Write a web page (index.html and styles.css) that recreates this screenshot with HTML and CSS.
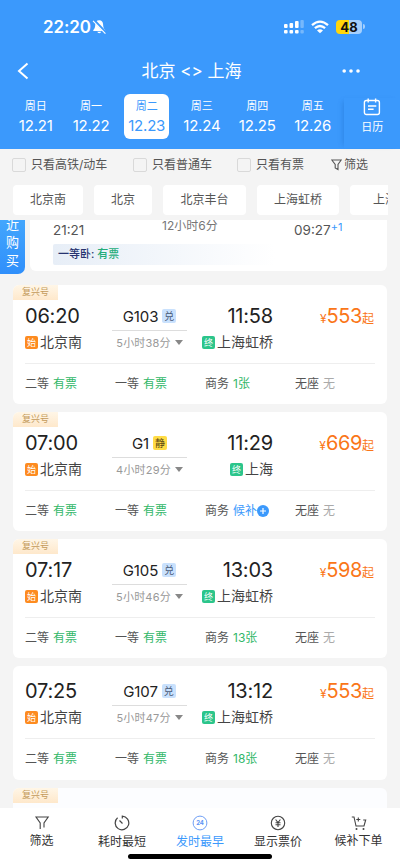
FILE: index.html
```html
<!DOCTYPE html>
<html lang="zh-CN">
<head>
<meta charset="utf-8">
<meta name="viewport" content="width=device-width, initial-scale=1">
<title>北京 - 上海</title>
<link rel="stylesheet" href="styles.css">
</head>
<body>
<div class="app">
  <header class="top">
    <div class="status">
      <span class="clock">22:20</span>
      <svg class="bell" width="15" height="16" viewBox="0 0 15 16"><path d="M7.2 1.2C4.6 1.2 3.4 3 3.3 5.4 3.2 8.2 2.700 9.500 1.300 11V12H13.200V11C11.700 9.500 11.200 8.200 11.100 5.400 11 3 9.800 1.200 7.200 1.200ZM5.300 12.800A2 1.800 0 0 0 9.200 12.800Z" fill="#fff"/><path d="M2.200 1.500 14.200 14" stroke="#3b99fc" stroke-width="2.600"/><path d="M1 1.800 13.400 14.600" stroke="#fff" stroke-width="1.100"/></svg>
      <span class="fill"></span>
      <svg class="signal" width="22" height="16" viewBox="0 0 22 16"><g fill="#fff"><rect x="1" y="5" width="3.600" height="4" rx="1"/><rect x="6.500" y="4" width="3.600" height="5" rx="1"/><rect x="12" y="2" width="3.600" height="7" rx="1"/><rect x="1" y="11" width="3.600" height="3.500" rx="1"/><rect x="6.500" y="11" width="3.600" height="3.500" rx="1"/><rect x="12" y="11" width="3.600" height="3.500" rx="1"/></g><g fill="#fff" opacity=".3"><rect x="17.400" y="1" width="3.400" height="8" rx="1"/><rect x="17.400" y="11" width="3.400" height="3.500" rx="1"/></g></svg>
      <svg class="wifi" width="18" height="14" viewBox="0 0 18 14"><g fill="none" stroke="#fff" stroke-width="2.300"><path d="M1 5.200Q9-2 17 5.200"/><path d="M3.900 8.200Q9 3.800 14.100 8.200"/></g><path d="M6 10.400Q9 7.900 12 10.400L9 13.300Z" fill="#fff"/></svg>
      <span class="battery">48</span><i class="cap"></i>
    </div>
    <div class="nav">
      <svg width="12" height="18" viewBox="0 0 12 18"><path d="M10.500 1.500 2 9l8.500 7.500" fill="none" stroke="#fff" stroke-width="2"/></svg>
      <h1>北京 &lt;&gt; 上海</h1>
      <svg width="18" height="6" viewBox="0 0 18 6"><g fill="#fff"><circle cx="2.200" cy="3" r="1.800"/><circle cx="9" cy="3" r="1.800"/><circle cx="16" cy="3" r="1.800"/></g></svg>
    </div>
    <div class="dates">
      <div class="day"><span>周日</span><b>12.21</b></div>
      <div class="day"><span>周一</span><b>12.22</b></div>
      <div class="day active"><span>周二</span><b>12.23</b></div>
      <div class="day"><span>周三</span><b>12.24</b></div>
      <div class="day"><span>周四</span><b>12.25</b></div>
      <div class="day"><span>周五</span><b>12.26</b></div>
      <div class="calendar">
        <svg width="18" height="18" viewBox="0 0 18 18" fill="none" stroke="#fff" stroke-width="1.400"><rect x="1.400" y="2.500" width="15" height="14" rx="2"/><path d="M5.200 .5v4M12.600 .5v4M5 8h8.300M5 11.300h5.600"/></svg>
        <span>日历</span>
      </div>
    </div>
  </header>

  <div class="filters">
    <label class="check c1"><i></i>只看高铁/动车</label>
    <label class="check c2"><i></i>只看普通车</label>
    <label class="check c3"><i></i>只看有票</label>
    <span class="sift"><svg width="11" height="12" viewBox="0 0 11 12"><path d="M.8 1h9.400L7 5.500v5L4.200 9V5.500Z" fill="none" stroke="#555" stroke-width="1.100"/></svg>筛选</span>
  </div>
  <div class="stations">
    <span class="s1">北京南</span><span class="s2">北京</span><span class="s3">北京丰台</span><span class="s4">上海虹桥</span><span class="s5">上海</span>
  </div>

  <main class="list">
    <section class="partial">
      <aside class="recent"><span>近</span><span>购</span><span>买</span></aside>
      <div class="clipped">
        <div class="times"><span class="from">21:21</span><span class="dur">12小时6分</span><span class="to">09:27<sup>+1</sup></span></div>
        <div class="sleeper">一等卧: <em>有票</em></div>
      </div>
    </section>

    <article class="card">
      <span class="tag">复兴号</span>
      <div class="trip">
        <div class="dep"><b>06:20</b><p><i class="start">始</i>北京南</p></div>
        <div class="mid"><strong>G103<i class="swap">兑</i></strong><hr><small>5小时38分<u></u></small></div>
        <div class="arr"><b>11:58</b><p><i class="end">终</i>上海虹桥</p></div>
        <div class="price"><small>¥</small>553<small>起</small></div>
      </div>
      <div class="seats"><span>二等 <em>有票</em></span><span>一等 <em>有票</em></span><span>商务 <em>1张</em></span><span>无座 <em class="none">无</em></span></div>
    </article>

    <article class="card">
      <span class="tag">复兴号</span>
      <div class="trip">
        <div class="dep"><b>07:00</b><p><i class="start">始</i>北京南</p></div>
        <div class="mid"><strong>G1<i class="quiet">静</i></strong><hr><small>4小时29分<u></u></small></div>
        <div class="arr"><b>11:29</b><p><i class="end">终</i>上海</p></div>
        <div class="price"><small>¥</small>669<small>起</small></div>
      </div>
      <div class="seats"><span>二等 <em>有票</em></span><span>一等 <em>有票</em></span><span>商务 <em class="wait">候补<svg width="12" height="12" viewBox="0 0 12 12"><circle cx="6" cy="6" r="6" fill="#3b99fc"/><path d="M6 3v6M3 6h6" stroke="#fff" stroke-width="1.200"/></svg></em></span><span>无座 <em class="none">无</em></span></div>
    </article>

    <article class="card">
      <span class="tag">复兴号</span>
      <div class="trip">
        <div class="dep"><b>07:17</b><p><i class="start">始</i>北京南</p></div>
        <div class="mid"><strong>G105<i class="swap">兑</i></strong><hr><small>5小时46分<u></u></small></div>
        <div class="arr"><b>13:03</b><p><i class="end">终</i>上海虹桥</p></div>
        <div class="price"><small>¥</small>598<small>起</small></div>
      </div>
      <div class="seats"><span>二等 <em>有票</em></span><span>一等 <em>有票</em></span><span>商务 <em>13张</em></span><span>无座 <em class="none">无</em></span></div>
    </article>

    <article class="card plain">
      <div class="trip">
        <div class="dep"><b>07:25</b><p><i class="start">始</i>北京南</p></div>
        <div class="mid"><strong>G107<i class="swap">兑</i></strong><hr><small>5小时47分<u></u></small></div>
        <div class="arr"><b>13:12</b><p><i class="end">终</i>上海虹桥</p></div>
        <div class="price"><small>¥</small>553<small>起</small></div>
      </div>
      <div class="seats"><span>二等 <em>有票</em></span><span>一等 <em>有票</em></span><span>商务 <em>18张</em></span><span>无座 <em class="none">无</em></span></div>
    </article>

    <article class="card peek"><span class="tag">复兴号</span></article>
  </main>

  <footer class="tabs">
    <div class="tab side"><svg width="16" height="16" viewBox="0 0 16 16" fill="none" stroke="#444" stroke-width="1.100"><path d="M6.200 14V8L2 2h12.200L10 8v4.500"/></svg><span>筛选</span></div>
    <div class="tab"><svg width="16" height="16" viewBox="0 0 16 16" fill="none" stroke="#444" stroke-width="1.200"><path d="M8.300 3.500V1.200A6.800 6.800 0 1 1 3.600 2.800M5.500 5.500l3 3"/></svg><span>耗时最短</span></div>
    <div class="tab on"><svg width="16" height="16" viewBox="0 0 16 16"><circle cx="8" cy="8" r="6.900" fill="none" stroke="#6f9ff5" stroke-width="1"/><text x="8" y="10.200" text-anchor="middle" class="num">24</text></svg><span>发时最早</span></div>
    <div class="tab"><svg width="16" height="16" viewBox="0 0 16 16" fill="none" stroke="#444" stroke-width="1.100"><circle cx="8" cy="8" r="6.700"/><path d="M5.600 4.500 8 7.500l2.400-3M8 7.500V12M5.500 7.700h5M5.500 9.800h5"/></svg><span>显示票价</span></div>
    <div class="tab side"><svg width="16" height="16" viewBox="0 0 16 16" fill="none" stroke="#444" stroke-width="1.100"><path d="M.8 2h2.200l2 9h8l1.700-6h-2.500M7.300 2.500v4M5.300 4.500h4"/><g fill="#444" stroke="none"><circle cx="5.500" cy="14" r="1"/><circle cx="12.500" cy="14" r="1"/></g></svg><span>候补下单</span></div>
    <i class="home"></i>
  </footer>
</div>
</body>
</html>
```
FILE: styles.css
```css
* { box-sizing: border-box; margin: 0; padding: 0; }
body { font-family: Inter, "Noto Sans CJK SC", sans-serif; color: #555; }
i, em { font-style: normal; }
svg { display: block; flex: none; }
.app { width: 400px; height: 867px; overflow: hidden; background: #f4f4f4; display: flex; flex-direction: column; }

.top { height: 149px; flex: none; background: #3b99fc; color: #fff; }
.status { height: 49px; padding: 12px 35px 0 43px; display: flex; align-items: center; }
.status > * { margin-top: -8px; }
.clock { font-size: 17px; font-weight: 600; line-height: 20px; width: 49px; letter-spacing: -.1px; }
.status .fill { flex: 1; }
.wifi { margin-left: 6px; margin-right: 7px; }
.battery { width: 26px; height: 14px; line-height: 14px; border-radius: 4px; text-align: center; font-size: 13px; font-weight: 700; color: #111; background: linear-gradient(90deg, #ffd60a 50%, #a5d0fd 50%); }
.cap { width: 2px; height: 5px; margin-left: 1px; border-radius: 0 2px 2px 0; background: #a5d0fd; }
.nav { height: 44px; padding: 0 40px 0 17px; display: flex; align-items: center; justify-content: space-between; }
.nav h1 { font-size: 17px; font-weight: 400; line-height: 24px; margin-left: 12px; white-space: nowrap; }
.dates { height: 56px; display: flex; padding-left: 8px; }
.day { width: 55.400px; height: 45px; margin-top: 1px; padding-top: 4px; text-align: center; flex: none; }
.day span, .day b { display: block; font-weight: 400; }
.day span { font-size: 11px; line-height: 16px; }
.day b { font-size: 15px; line-height: 18px; margin-top: 3px; letter-spacing: -.2px; }
.day.active { width: 45px; margin-left: 5.400px; margin-right: 5px; background: #fff; color: #3b99fc; border-radius: 6px; }
.calendar { flex: 1; margin-left: 4px; height: 50px; margin-top: 5px; display: flex; flex-direction: column; align-items: center; font-size: 11px; line-height: 16px; box-shadow: -4px 0 5px -3px rgba(20, 90, 180, .3); }
.calendar svg { margin-bottom: 3px; }

.filters { height: 36px; flex: none; display: flex; align-items: center; padding: 0 0 4px 12px; font-size: 12px; line-height: 18px; }
.check, .sift { display: flex; align-items: center; flex: none; white-space: nowrap; }
.check i { width: 14px; height: 14px; border: 1px solid #d9d9d9; border-radius: 2px; margin-right: 5px; }
.c1 { width: 121px; }
.c2 { width: 104px; }
.c3 { width: 94px; }
.sift svg { margin-right: 2px; }
.stations { height: 35px; flex: none; margin: 0 12px 0 13px; display: flex; gap: 11px; overflow: hidden; }
.stations span { height: 30px; line-height: 30px; flex: none; font-size: 12px; background: #fff; border-radius: 4px; text-align: center; }
.s1 { width: 70px; }
.s2 { width: 58px; }
.s3 { width: 83px; }
.s4 { width: 82px; }
.s5 { width: 70px; }

.list { flex: 1; min-height: 0; overflow: hidden; }
.partial { height: 65px; display: flex; }
.recent { width: 25px; height: 54px; overflow: hidden; flex: none; background: #3b9dff; background: linear-gradient(#43a6fd, #2f8ffb); border-radius: 0 0 7px 0; color: #fff; display: flex; flex-direction: column; justify-content: flex-end; align-items: center; font-size: 13px; line-height: 18px; padding-bottom: 5px; }
.recent span { flex: none; }
.clipped { width: 357px; height: 51px; margin-left: 5px; padding: 0 23px; background: #fff; border-radius: 0 0 6px 6px; }
.times { height: 24px; display: flex; }
.times .from { width: 109px; font-size: 13.500px; line-height: 20px; }
.times .dur { width: 132px; font-size: 12px; line-height: 11px; color: #777; }
.times .to { white-space: nowrap; font-size: 13.500px; line-height: 20px; }
.times sup { font-size: 11px; line-height: 11px; vertical-align: 4px; color: #3b99fc; }
.sleeper { height: 21px; width: 222px; line-height: 21px; padding-left: 5px; font-size: 11px; font-weight: 500; color: #27336f; background: linear-gradient(90deg, #e7eef7, #fff); border-radius: 2px; }
.sleeper em { color: #24ad7a; }

.card { width: 374px; height: 119px; margin: 0 0 8px 13px; padding: 0 12px; background: #fff; border-radius: 6px; overflow: hidden; }
.tag { display: block; width: 45px; height: 15px; margin-left: -12px; background: linear-gradient(#fff6e7, #fee8cb); color: #c39a5a; font-size: 9px; line-height: 14px; text-align: center; }
.trip { height: 64px; padding-top: 4px; display: grid; grid-template-columns: 87px 75px 86px 101px; border-bottom: 1px solid #eee; }
.dep b, .arr b { display: block; font-size: 20px; font-weight: 400; line-height: 24px; letter-spacing: -.2px; color: #222; }
.dep p, .arr p { display: flex; align-items: center; height: 20px; margin-top: 4px; font-size: 14px; line-height: 20px; color: #444; white-space: nowrap; }
.arr { text-align: right; }
.arr p { justify-content: flex-end; }
.start, .end { width: 13px; height: 13px; margin-right: 2px; border-radius: 2px; color: #fff; font-size: 9px; line-height: 13px; text-align: center; }
.start { background: #fd8b20; }
.end { background: #2cc58b; }
.mid { text-align: center; }
.mid strong { display: flex; justify-content: center; align-items: center; height: 24px; font-size: 15px; font-weight: 400; color: #222; letter-spacing: -.1px; }
.mid strong i { width: 14px; height: 14px; margin-left: 4px; border-radius: 2px; font-size: 10px; line-height: 14px; letter-spacing: 0; }
.swap { background: #c9e1fd; color: #4a5a78; }
.quiet { background: #ffdc45; color: #5b4a12; }
.mid hr { border: 0; height: 1px; margin: 2px 0 1px; background: #ddd; }
.mid small { display: flex; justify-content: center; align-items: center; height: 20px; font-size: 11px; color: #999; white-space: nowrap; letter-spacing: .2px; }
.mid u { margin-left: 4px; border: 4px solid transparent; border-top: 5px solid #888; border-bottom: 0; }
.price { text-align: right; font-size: 20px; line-height: 24px; color: #fa7618; white-space: nowrap; letter-spacing: -.4px; }
.price small { font-size: 12px; letter-spacing: 0; }
.seats { height: 40px; display: grid; grid-template-columns: 90px 90px 90px 79px; font-size: 12px; line-height: 40px; }
.seats span { display: flex; gap: 4px; white-space: nowrap; }
.seats em { color: #31b768; }
.seats .none { color: #aaa; }
.seats .wait { display: flex; align-items: center; color: #3b99fc; }
.plain { height: 114px; }
.plain .trip { margin-top: 9px; }
.peek { margin-bottom: 0; background: #fcfdff; }

.tabs { height: 59px; flex: none; position: relative; display: grid; grid-template-columns: 83px 78px 78px 78px 83px; background: #fff; color: #333; font-size: 12px; line-height: 18px; }
.tab { padding-top: 7px; display: flex; flex-direction: column; align-items: center; }
.tab span { margin-top: 2px; }
.tab.side span { margin-top: 1px; }
.on { color: #3b99fc; }
.num { font-size: 6px; font-weight: 700; fill: #5c93f5; }
.home { position: absolute; left: 128px; bottom: 8px; width: 144px; height: 5px; border-radius: 3px; background: #000; }
```
